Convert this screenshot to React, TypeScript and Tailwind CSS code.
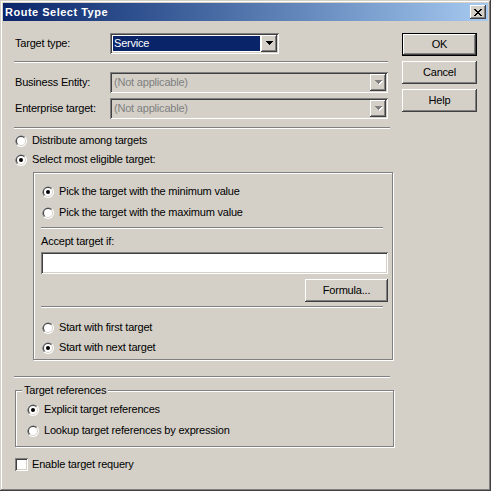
import React from "react";

const raised =
  "bg-[#d4d0c8] shadow-[inset_-1px_-1px_#404040,inset_1px_1px_#ffffff,inset_-2px_-2px_#808080,inset_2px_2px_#d4d0c8]";
const sunken =
  "shadow-[inset_1px_1px_#808080,inset_-1px_-1px_#ffffff,inset_2px_2px_#404040,inset_-2px_-2px_#d4d0c8]";
const etched = "border border-[#808080] shadow-[inset_1px_1px_#ffffff,1px_1px_#ffffff]";

function Sep({ className = "" }: { className?: string }) {
  return <div className={`h-[2px] border-t border-t-[#808080] border-b border-b-white ${className}`} />;
}

function Radio({ checked }: { checked?: boolean }) {
  return (
    <svg width="12" height="12" viewBox="0 0 12 12" className="shrink-0">
      <circle cx="6" cy="6" r="6" fill="#ffffff" />
      <path d="M1.76 10.24A6 6 0 0 1 10.24 1.76Z" fill="#808080" />
      <circle cx="6" cy="6" r="5" fill="#d4d0c8" />
      <path d="M2.46 9.54A5 5 0 0 1 9.54 2.46Z" fill="#404040" />
      <circle cx="6" cy="6" r="4" fill="#ffffff" />
      {checked && <circle cx="6" cy="6" r="2" fill="#000000" />}
    </svg>
  );
}

function RadioRow({ label, checked, className = "" }: { label: string; checked?: boolean; className?: string }) {
  return (
    <div className={`flex items-center h-[13px] gap-[5px] ${className}`}>
      <Radio checked={checked} />
      <span className="whitespace-nowrap">{label}</span>
    </div>
  );
}

const arrowPath = "M0 0H7V1H6V2H5V3H4V4H3V3H2V2H1V1H0Z";

function Arrow({ disabled }: { disabled?: boolean }) {
  return (
    <svg width="8" height="5" viewBox="0 0 8 5" shapeRendering="crispEdges">
      {disabled && <path d={arrowPath} fill="#ffffff" transform="translate(1 1)" />}
      <path d={arrowPath} fill={disabled ? "#808080" : "#000000"} />
    </svg>
  );
}

function Combo({
  value,
  disabled,
  selected,
  className = "",
}: {
  value: string;
  disabled?: boolean;
  selected?: boolean;
  className?: string;
}) {
  return (
    <div className={`flex h-[21px] p-[2px] ${sunken} ${disabled ? "bg-[#d4d0c8]" : "bg-white"} ${className}`}>
      <div className="flex-1 flex p-[1px]">
        <div
          className={`flex-1 flex items-center pl-[1px] ${selected ? "bg-[#0a246a] text-white" : ""} ${
            disabled ? "text-[#808080]" : ""
          }`}
        >
          {value}
        </div>
      </div>
      <div className={`w-[16px] h-full flex items-center justify-center pl-[1px] ${raised}`}>
        <Arrow disabled={disabled} />
      </div>
    </div>
  );
}

function CloseGlyph() {
  const rows: [number, number][][] = [
    [[0, 2], [6, 8]],
    [[1, 3], [5, 7]],
    [[2, 6]],
    [[3, 5]],
    [[2, 6]],
    [[1, 3], [5, 7]],
    [[0, 2], [6, 8]],
  ];
  return (
    <svg width="8" height="7" viewBox="0 0 8 7" shapeRendering="crispEdges">
      {rows.map((segs, y) =>
        segs.map(([a, b]) => <rect key={`${y}-${a}`} x={a} y={y} width={b - a} height="1" fill="#000000" />)
      )}
    </svg>
  );
}

function Button({ label, className = "" }: { label: string; className?: string }) {
  return <div className={`h-[23px] flex items-center justify-center ${raised} ${className}`}>{label}</div>;
}

export default function App() {
  return (
    <div className="w-[491px] h-[491px] overflow-hidden bg-[#d4d0c8] p-[3px] flex flex-col select-none font-['Liberation_Sans',Arial,sans-serif] text-[11px] leading-[13px] tracking-[-0.2px] text-black shadow-[inset_-1px_-1px_#404040,inset_1px_1px_#d4d0c8,inset_-2px_-2px_#808080,inset_2px_2px_#ffffff]">
      {/* title bar */}
      <div className="h-[18px] shrink-0 flex items-center justify-between pl-[2px] pr-[2px] bg-linear-to-r from-[#0a246a] to-[#a6caf0]">
        <span className="text-white font-bold tracking-[0.5px]">Route Select Type</span>
        <div className={`w-[16px] h-[14px] flex items-center justify-center ${raised}`}>
          <CloseGlyph />
        </div>
      </div>

      <div className="flex-1 flex">
        {/* left column */}
        <div className="ml-[11px] w-[380px] flex flex-col">
          <div className="mt-[12px] h-[21px] flex items-center">
            <span className="w-[96px] pl-[1px]">Target type:</span>
            <Combo value="Service" selected className="w-[169px]" />
          </div>
          <Sep className="mt-[7px] w-[374px]" />
          <div className="mt-[9px] h-[21px] flex items-center">
            <span className="w-[96px] pl-[1px]">Business Entity:</span>
            <Combo value="(Not applicable)" disabled className="w-[278px]" />
          </div>
          <div className="mt-[5px] h-[21px] flex items-center">
            <span className="w-[96px] pl-[1px]">Enterprise target:</span>
            <Combo value="(Not applicable)" disabled className="w-[278px]" />
          </div>
          <Sep className="mt-[8px] w-[376px]" />

          <RadioRow label="Distribute among targets" className="mt-[5px] pl-[1px]" />
          <RadioRow label="Select most eligible target:" checked className="mt-[6px] pl-[1px]" />

          {/* eligible target options */}
          <div className={`mt-[6px] ml-[19px] w-[360px] h-[188px] ${etched}`}>
            <div className="pl-[7px] w-[354px] flex flex-col">
              <RadioRow label="Pick the target with the minimum value" checked className="mt-[12px] pl-[1px]" />
              <RadioRow label="Pick the target with the maximum value" className="mt-[8px] pl-[1px]" />
              <Sep className="mt-[8px] w-[342px]" />
              <div className="mt-[6px]">Accept target if:</div>
              <div className={`mt-[4px] h-[22px] w-[347px] bg-white ${sunken}`} />
              <div className="w-[347px] flex justify-end">
                <Button label="Formula..." className="mt-[5px] w-[83px]" />
              </div>
              <Sep className="mt-[4px] w-[342px]" />
              <RadioRow label="Start with first target" className="mt-[13px] pl-[1px]" />
              <RadioRow label="Start with next target" checked className="mt-[7px] pl-[1px]" />
            </div>
          </div>

          <Sep className="mt-[16px] w-[376px]" />

          {/* target references */}
          <div className={`mt-[12px] ml-[1px] w-[379px] h-[57px] ${etched}`}>
            <div className="-mt-[7px] ml-[6px] px-[2px] w-fit bg-[#d4d0c8]">Target references</div>
            <RadioRow label="Explicit target references" checked className="mt-[6px] ml-[11px]" />
            <RadioRow label="Lookup target references by expression" className="mt-[8px] ml-[11px]" />
          </div>

          <div className="mt-[11px] ml-[1px] flex items-center gap-[4px] h-[13px]">
            <div className={`w-[13px] h-[13px] bg-white ${sunken}`} />
            <span>Enable target requery</span>
          </div>
        </div>

        {/* buttons */}
        <div className="mt-[12px] ml-[8px] w-[75px] flex flex-col gap-[5px]">
          <div className="h-[23px] border border-black">
            <div className={`h-full flex items-center justify-center ${raised}`}>OK</div>
          </div>
          <Button label="Cancel" />
          <Button label="Help" />
        </div>
      </div>
    </div>
  );
}
